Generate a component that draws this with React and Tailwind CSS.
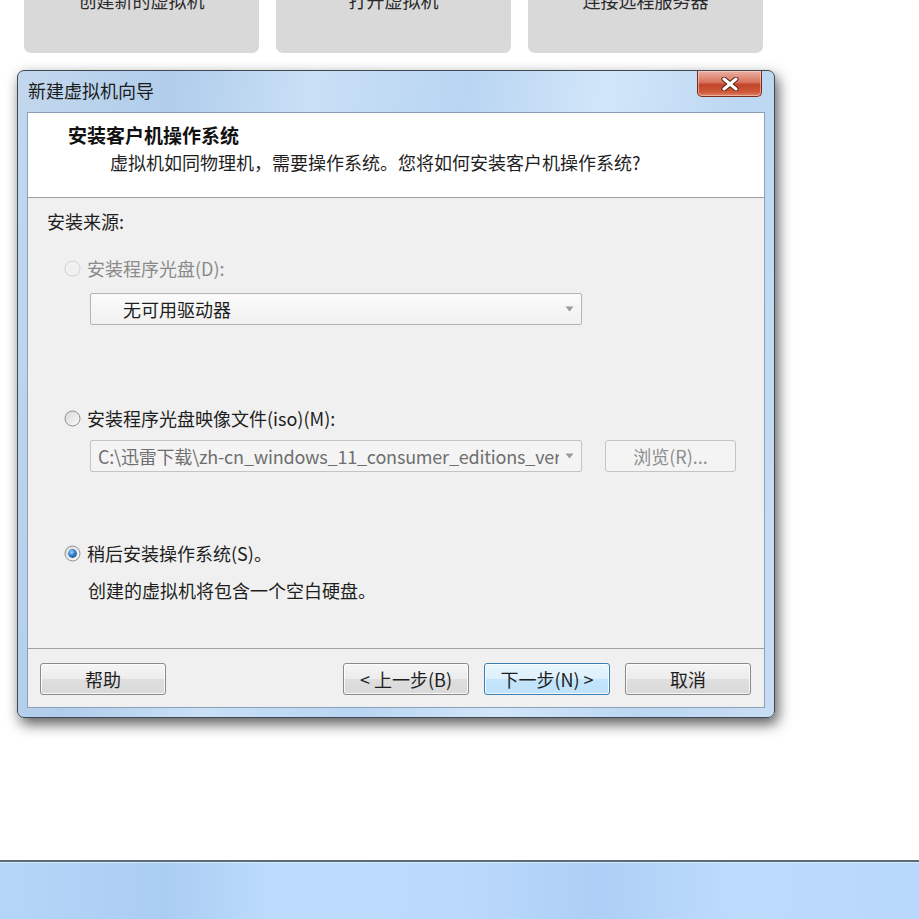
import React from "react";

function Radio({ state }) {
  if (state === "disabled") {
    return (
      <svg width="17" height="17" viewBox="0 0 17 17" className="shrink-0">
        <circle cx="8.5" cy="8.5" r="7.5" fill="#f4f4f4" stroke="#cfcfcf" strokeWidth="1" />
        <circle cx="8.5" cy="8.5" r="6" fill="#f0f0f0" />
      </svg>
    );
  }
  return (
    <svg width="17" height="17" viewBox="0 0 17 17" className="shrink-0">
      <defs>
        <linearGradient id={"rg" + state} x1="0" y1="0" x2="1" y2="1">
          <stop offset="0" stopColor="#d8d8d8" />
          <stop offset="1" stopColor="#fbfbfb" />
        </linearGradient>
        <radialGradient id="dot" cx="0.4" cy="0.35" r="0.7">
          <stop offset="0" stopColor="#a9d4f7" />
          <stop offset="0.55" stopColor="#2f7fcf" />
          <stop offset="1" stopColor="#1a4f8c" />
        </radialGradient>
      </defs>
      <circle cx="8.5" cy="8.5" r="7.5" fill={"url(#rg" + state + ")"} stroke="#8e8f8f" strokeWidth="1" />
      {state === "checked" && <circle cx="8.5" cy="8.5" r="4.4" fill="url(#dot)" />}
    </svg>
  );
}

function Arrow() {
  return (
    <svg width="9" height="6" viewBox="0 0 9 6" className="shrink-0">
      <path d="M0.5 0.5 L8.5 0.5 L4.5 5.5 Z" fill="#9a9a9a" />
    </svg>
  );
}

function Btn({ children, primary }) {
  return (
    <div
      className={
        "w-[126px] h-[32px] rounded-[3px] border flex items-center justify-center text-[18px] text-[#1e1e1e] shadow-[inset_0_0_0_1px_rgba(255,255,255,0.8)] " +
        (primary
          ? "border-[#3c7fb1] bg-[linear-gradient(#e9f5fd_0%,#dcf0fc_50%,#c4e5fb_51%,#bfe2fa_100%)]"
          : "border-[#8a8a8a] bg-[linear-gradient(#f5f5f5_0%,#ececec_50%,#dfdfdf_51%,#d9d9d9_100%)]")
      }
    >
      {children}
    </div>
  );
}

export default function App() {
  return (
    <div className="w-[919px] h-[919px] bg-white flex flex-col overflow-hidden font-['Noto_Sans_CJK_SC',sans-serif] text-[#1e1e1e]">
      {/* top cards */}
      <div className="flex gap-[17px] pl-[24px] h-[53px] shrink-0">
        {["创建新的虚拟机", "打开虚拟机", "连接远程服务器"].map((t) => (
          <div key={t} className="w-[235px] h-[53px] bg-[#d9d9d9] rounded-b-[7px] flex justify-center">
            <span className="-mt-[12px] leading-[24px] text-[18px] text-[#2a2a2a]">{t}</span>
          </div>
        ))}
      </div>

      {/* dialog */}
      <div className="ml-[17px] mt-[17px] w-[758px] h-[648px] shrink-0 rounded-[7px] border border-[#3f4853] shadow-[3px_6px_14px_rgba(0,0,0,0.65)] flex flex-col bg-[linear-gradient(100deg,#c3d8ee_0%,#b0cdeb_18%,#c9e0f6_34%,#b8d5f2_52%,#d2e6f9_68%,#bcd7f2_84%,#c8ddf3_100%)] overflow-hidden">
        {/* title bar */}
        <div className="h-[41px] shrink-0 flex items-start justify-between">
          <div className="pl-[10px] pt-[7px] text-[18px] leading-[24px] text-[#1b1b1b]">新建虚拟机向导</div>
          <div className="mr-[12px] w-[65px] h-[26px] rounded-b-[5px] border border-t-0 border-[#7b2a1c] bg-[linear-gradient(#eab0a2_0%,#d9735d_45%,#c2432a_55%,#cf5a3c_85%,#e0886a_100%)] flex items-center justify-center shadow-[inset_0_0_0_1px_rgba(255,220,210,0.5)]">
            <svg width="18" height="14" viewBox="0 0 18 14">
              <path d="M3 2 L15 12 M15 2 L3 12" stroke="#5a2418" strokeWidth="5" strokeLinecap="round" />
              <path d="M3 2 L15 12 M15 2 L3 12" stroke="#ffffff" strokeWidth="3" strokeLinecap="round" />
            </svg>
          </div>
        </div>

        {/* client area */}
        <div className="mx-[9px] h-[596px] shrink-0 border border-[#8ba1b9] flex flex-col bg-[#f0f0f0]">
          {/* header */}
          <div className="h-[85px] shrink-0 bg-white border-b border-[#a0a0a0] pt-[9px]">
            <div className="pl-[40px] text-[19px] leading-[26px] font-bold text-[#111]">安装客户机操作系统</div>
            <div className="pl-[82px] mt-[2px] text-[18px] leading-[24px]">
              虚拟机如同物理机，需要操作系统。您将如何安装客户机操作系统?
            </div>
          </div>

          {/* body */}
          <div className="h-[450px] shrink-0 flex flex-col text-[18px] leading-[24px]">
            <div className="pl-[19px] mt-[11px]">安装来源:</div>

            <div className="pl-[36px] mt-[23px] flex items-center gap-[6px] text-[#8a8a8a]">
              <Radio state="disabled" />
              <span>安装程序光盘(D):</span>
            </div>

            <div className="ml-[62px] mt-[13px] w-[492px] h-[32px] border border-[#b5b5b5] rounded-[2px] bg-[linear-gradient(#fbfbfb,#f1f1f1)] flex items-center justify-between pl-[32px] pr-[7px]">
              <span>无可用驱动器</span>
              <Arrow />
            </div>

            <div className="pl-[36px] mt-[81px] flex items-center gap-[6px]">
              <Radio state="off" />
              <span>安装程序光盘映像文件(iso)(M):</span>
            </div>

            <div className="ml-[62px] mt-[10px] flex items-center gap-[23px]">
              <div className="w-[492px] h-[32px] border border-[#c4c4c4] rounded-[2px] bg-[#f4f4f4] flex items-center pl-[7px] pr-[7px] gap-[6px] text-[#6f6f6f]">
                <span className="flex-1 min-w-0 overflow-hidden whitespace-nowrap tracking-[-0.2px]">
                  C:\迅雷下载\zh-cn_windows_11_consumer_editions_ver
                </span>
                <Arrow />
              </div>
              <div className="w-[131px] h-[32px] border border-[#c4c4c4] rounded-[3px] bg-[#f4f4f4] flex items-center justify-center text-[#8d8d8d]">
                浏览(R)...
              </div>
            </div>

            <div className="pl-[36px] mt-[69px] flex items-center gap-[6px]">
              <Radio state="checked" />
              <span>稍后安装操作系统(S)。</span>
            </div>

            <div className="pl-[60px] mt-[13px]">创建的虚拟机将包含一个空白硬盘。</div>
          </div>

          {/* buttons */}
          <div className="flex-1 border-t border-[#a0a0a0] flex items-start pt-[14px] pl-[12px] pr-[13px]">
            <Btn>帮助</Btn>
            <div className="flex-1" />
            <div className="flex gap-[15px]">
              <Btn>&lt; 上一步(B)</Btn>
              <Btn primary>下一步(N) &gt;</Btn>
              <Btn>取消</Btn>
            </div>
          </div>
        </div>
      </div>

      {/* taskbar */}
      <div className="mt-auto h-[59px] shrink-0 border-t-2 border-[#5b6b78] bg-[linear-gradient(90deg,#b5d6f8_0%,#aacdf2_18%,#bddcfd_30%,#bad9fc_50%,#aecff5_65%,#bcdbfd_80%,#b8d8fb_100%)] shadow-[inset_0_1px_0_#d7e9fb]" />
    </div>
  );
}
